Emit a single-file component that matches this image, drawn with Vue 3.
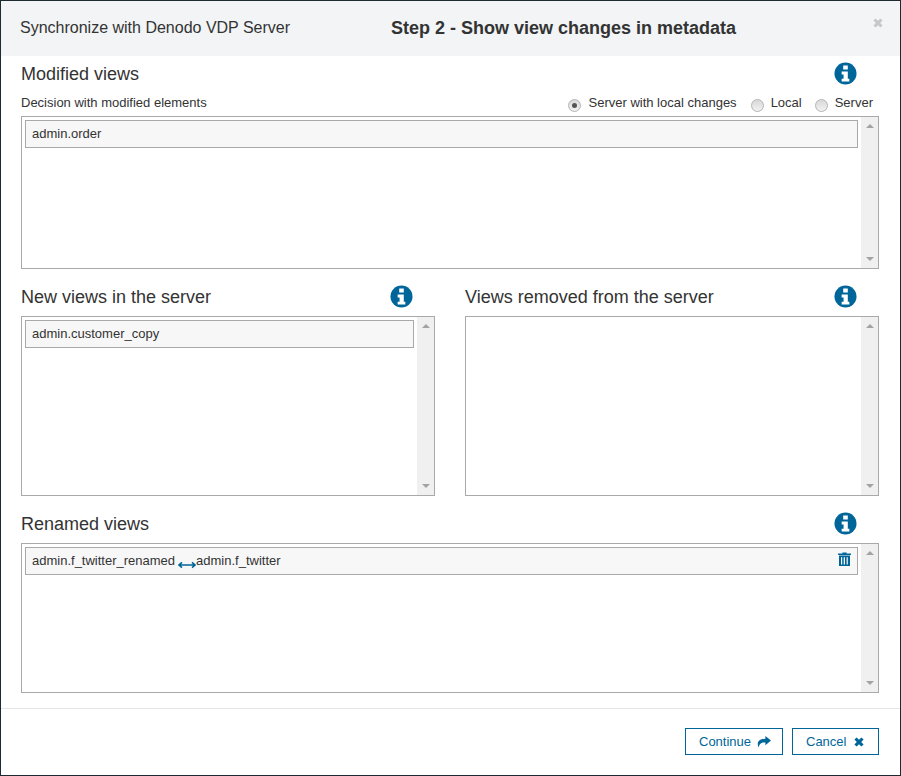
<script setup>
const radios = [
  { label: 'Server with local changes', checked: true },
  { label: 'Local', checked: false },
  { label: 'Server', checked: false },
]
</script>

<template>
  <div class="backdrop">
    <div class="modal">
      <header class="head">
        <span class="head-left">Synchronize with Denodo VDP Server</span>
        <span class="head-title">Step 2 - Show view changes in metadata</span>
        <svg class="close" viewBox="0 0 10 10"><path d="M2.6.4 5 2.8 7.4.4l2.2 2.2L7.2 5l2.4 2.4-2.2 2.2L5 7.2 2.6 9.6.4 7.4 2.8 5 .4 2.6z" fill="#c6c8ca" /></svg>
      </header>

      <main class="body">
        <section class="sec-a">
          <div class="title-row">
            <h2>Modified views</h2>
            <svg class="info" viewBox="0 0 24 24"><circle cx="12" cy="12" r="11.5" fill="#006699" /><path d="M9.6 3.6h4.8v4.2H9.6zM8 10h6.4v7.4H16V20.4H8v-3h2v-4.4H8z" fill="#fff" /></svg>
          </div>
          <div class="decision">
            <span class="decision-label">Decision with modified elements</span>
            <div class="radios">
              <label v-for="r in radios" :key="r.label" class="radio">
                <span class="dot" :class="{ on: r.checked }"></span>{{ r.label }}
              </label>
            </div>
          </div>
          <div class="box h153">
            <div class="list"><div class="item">admin.order</div></div>
            <div class="scroll"><i class="up"></i><i class="down"></i></div>
          </div>
        </section>

        <div class="cols">
          <section class="col">
            <div class="title-row tall">
              <h2>New views in the server</h2>
              <svg class="info" viewBox="0 0 24 24"><circle cx="12" cy="12" r="11.5" fill="#006699" /><path d="M9.6 3.6h4.8v4.2H9.6zM8 10h6.4v7.4H16V20.4H8v-3h2v-4.4H8z" fill="#fff" /></svg>
            </div>
            <div class="box h180">
              <div class="list"><div class="item">admin.customer_copy</div></div>
              <div class="scroll"><i class="up"></i><i class="down"></i></div>
            </div>
          </section>
          <section class="col">
            <div class="title-row tall">
              <h2>Views removed from the server</h2>
              <svg class="info" viewBox="0 0 24 24"><circle cx="12" cy="12" r="11.5" fill="#006699" /><path d="M9.6 3.6h4.8v4.2H9.6zM8 10h6.4v7.4H16V20.4H8v-3h2v-4.4H8z" fill="#fff" /></svg>
            </div>
            <div class="box h180">
              <div class="list"></div>
              <div class="scroll"><i class="up"></i><i class="down"></i></div>
            </div>
          </section>
        </div>

        <section class="sec-c">
          <div class="title-row tall">
            <h2>Renamed views</h2>
            <svg class="info" viewBox="0 0 24 24"><circle cx="12" cy="12" r="11.5" fill="#006699" /><path d="M9.6 3.6h4.8v4.2H9.6zM8 10h6.4v7.4H16V20.4H8v-3h2v-4.4H8z" fill="#fff" /></svg>
          </div>
          <div class="box h150">
            <div class="list">
              <div class="item renamed">
                <span>admin.f_twitter_renamed</span>
                <svg class="swap" viewBox="0 0 18 8"><path d="M1 4h16M4 1.4 1 4l3 2.6M14 1.4 17 4l-3 2.6" fill="none" stroke="#006699" stroke-width="1.6" /></svg>
                <span>admin.f_twitter</span>
                <svg class="trash" viewBox="0 0 13 14"><path d="M4.4 1.6V.4h4.2v1.2H13v1.4H0V1.6zM1 3.6h11V14H1zm2 1.6v7.2h1.2V5.2zm2.7 0v7.2h1.3V5.2zm2.9 0v7.2h1.2V5.2z" fill="#006699" fill-rule="evenodd" /></svg>
              </div>
            </div>
            <div class="scroll"><i class="up"></i><i class="down"></i></div>
          </div>
        </section>
      </main>

      <footer class="foot">
        <button class="btn continue">Continue
          <svg viewBox="0 0 14 12"><path d="M8.4 0 14 4.6 8.4 9.2V6.4C4.6 6.2 2.4 7.2 1.6 11.6.2 8.6-.4 3 8.4 2.7z" fill="#006699" /></svg>
        </button>
        <button class="btn cancel">Cancel
          <svg viewBox="0 0 10 10"><path d="M2.6.4 5 2.8 7.4.4l2.2 2.2L7.2 5l2.4 2.4-2.2 2.2L5 7.2 2.6 9.6.4 7.4 2.8 5 .4 2.6z" fill="#006699" /></svg>
        </button>
      </footer>
    </div>
  </div>
</template>

<style>
html, body { margin: 0; padding: 0; background: #1e2a32; }
</style>

<style scoped>
.backdrop {
  width: 901px;
  height: 776px;
  box-sizing: border-box;
  padding: 1px;
  background: #1e2a32;
  font-family: "Liberation Sans", Arial, sans-serif;
  color: #333;
  overflow: hidden;
}
.modal {
  height: 774px;
  background: #fff;
  display: flex;
  flex-direction: column;
}
.head {
  height: 55px;
  flex: none;
  background: #f2f4f6;
  display: flex;
  align-items: center;
  padding: 0 19px;
  position: relative;
}
.head-left { font-size: 16px; width: 371px; flex: none; margin-top: -2px; }
.head-title { font-size: 18px; font-weight: 700; }
.close {
  position: absolute;
  right: 17px;
  top: 17px;
  width: 10px;
  height: 10px;
}
.body { padding: 0 21px 0 20px; flex: 1; }
h2 { margin: 0; font-size: 18px; font-weight: 400; line-height: 20px; color: #333; }
.title-row {
  height: 28px;
  display: flex;
  align-items: center;
  justify-content: space-between;
  padding-right: 22px;
}
.title-row.tall { height: 33px; padding-bottom: 5px; box-sizing: border-box; }
.info { width: 23px; height: 23px; display: block; margin-top: -1px; }
.sec-a { padding-top: 4px; }
.decision {
  height: 28px;
  display: flex;
  justify-content: space-between;
  font-size: 13px;
}
.decision-label { line-height: 20px; padding-top: 5px; }
.radios { display: flex; align-items: flex-start; padding-right: 6px; }
.radio {
  display: flex;
  align-items: flex-start;
  margin-left: 14px;
  line-height: 16px;
  padding-top: 7px;
}
.radio:last-child { margin-left: 13px; }
.dot {
  width: 13px;
  height: 13px;
  box-sizing: border-box;
  border: 1px solid #b4b4b4;
  border-radius: 50%;
  background: linear-gradient(#d8d8d8, #f2f2f2);
  margin: 4px 7px 0 0;
  position: relative;
}
.dot.on::after {
  content: "";
  position: absolute;
  left: 3px;
  top: 3px;
  width: 5px;
  height: 5px;
  border-radius: 50%;
  background: #555;
}
.box {
  border: 1px solid #a9a9a9;
  box-sizing: border-box;
  display: flex;
  background: #fff;
}
.h153 { height: 153px; }
.h180 { height: 180px; }
.h150 { height: 150px; }
.list { flex: 1; padding: 3px 3px 0 3px; min-width: 0; }
.item {
  height: 28px;
  box-sizing: border-box;
  border: 1px solid #a9a9a9;
  background: #f7f7f7;
  font-size: 13px;
  line-height: 25px;
  padding-left: 6px;
  color: #333;
}
.scroll {
  width: 17px;
  flex: none;
  background: #f0f0f0;
  position: relative;
}
.up, .down {
  position: absolute;
  left: 5px;
  width: 0;
  height: 0;
  border-left: 4px solid transparent;
  border-right: 4px solid transparent;
}
.up { top: 7px; border-bottom: 4px solid #a3a3a3; }
.down { bottom: 7px; border-top: 4px solid #a3a3a3; }
.cols { display: grid; grid-template-columns: 414px 414px; column-gap: 30px; margin-top: 14px; }
.sec-c { margin-top: 14px; }
.renamed { display: flex; align-items: center; position: relative; padding-bottom: 2px; }
.swap { width: 18px; height: 8px; margin: 9px 0 0 3px; flex: none; }
.trash { position: absolute; right: 6px; top: 4px; width: 13px; height: 14px; }
.foot {
  height: 67px;
  flex: none;
  border-top: 1px solid #e5e5e5;
  display: flex;
  justify-content: flex-end;
  gap: 9px;
  padding: 19px 21px 0 0;
  box-sizing: border-box;
}
.btn {
  height: 27px;
  box-sizing: border-box;
  border: 1px solid #006699;
  background: #fff;
  color: #006699;
  font-family: inherit;
  font-size: 13px;
  padding: 0;
  display: flex;
  align-items: center;
}
.continue { width: 98px; padding-left: 13px; }
.continue svg { width: 14px; height: 12px; margin-left: 6px; }
.cancel { width: 87px; padding-left: 13px; }
.cancel svg { width: 10px; height: 10px; margin-left: 8px; }
</style>
